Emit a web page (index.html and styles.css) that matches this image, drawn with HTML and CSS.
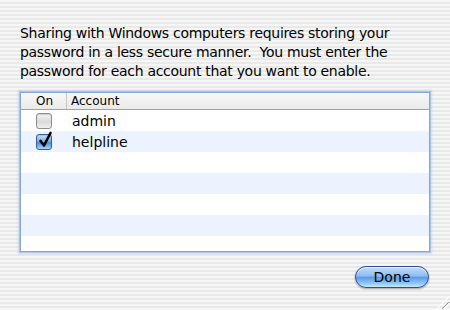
FILE: index.html
```html
<!DOCTYPE html>
<html lang="en">
<head>
    <meta charset="UTF-8">
    <title>Windows Sharing Accounts</title>
    <link rel="stylesheet" href="styles.css">
</head>
<body>
    <div class="sheet">
        <p class="msg">Sharing with Windows computers requires storing your<br>password in a less secure manner.&nbsp; You must enter the<br>password for each account that you want to enable.</p>

        <div class="list">
            <div class="head">
                <div class="col-on">On</div>
                <div class="col-acc">Account</div>
            </div>
            <div class="row">
                <div class="col-on"><span class="check"></span></div>
                <div class="col-acc">admin</div>
            </div>
            <div class="row">
                <div class="col-on">
                    <span class="check on">
                        <svg viewBox="0 0 16 18" width="16" height="18"><path d="M3.5 10 L7 14.5 L13.5 2" fill="none" stroke="#000" stroke-width="2.6" stroke-linecap="round" stroke-linejoin="round"/></svg>
                    </span>
                </div>
                <div class="col-acc">helpline</div>
            </div>
            <div class="row"></div>
            <div class="row"></div>
            <div class="row"></div>
            <div class="row"></div>
            <div class="row"></div>
        </div>

        <div class="buttons">
            <button class="done">Done</button>
        </div>
    </div>
    <div class="grip"></div>
</body>
</html>
```

FILE: styles.css
```css
html, body {
    margin: 0;
    height: 100%;
}
body {
    background: repeating-linear-gradient(to bottom, #f6f6f6 0, #f6f6f6 2px, #e9e9e9 2px, #e9e9e9 4px);
    font-family: 'DejaVu Sans', 'Lucida Grande', sans-serif;
    color: #000;
    position: relative;
    overflow: hidden;
}
.sheet {
    padding: 24px 20px 0 20px;
}
.msg {
    margin: 0;
    font-size: 14px;
    letter-spacing: -0.3px;
    line-height: 19px;
    white-space: nowrap;
}
.list {
    margin-top: 11px;
    height: 158px;
    background: #fff;
    border: 1px solid #8ba6cf;
    box-shadow: 0 0 0 1px rgba(140,175,225,0.55), 0 0 2px 2px rgba(160,190,235,0.45);
    overflow: hidden;
}
.head {
    display: flex;
    height: 16px;
    background: linear-gradient(to bottom, #f7f7f7 0%, #eaeaea 100%);
    border-bottom: 1px solid #a2a2a2;
    font-size: 12px;
    line-height: 16px;
}
.head .col-on {
    width: 46px;
    border-right: 1px solid #c6c6c6;
    padding-left: 15px;
    box-sizing: border-box;
}
.head .col-acc {
    padding-left: 4px;
}
.row {
    display: flex;
    align-items: center;
    height: 21px;
    font-size: 14px;
}
.row:nth-child(odd) {
    background: #edf3fe;
}
.row .col-on {
    width: 47px;
    padding-left: 15px;
    box-sizing: border-box;
    display: flex;
    align-items: center;
}
.row .col-acc {
    padding-left: 4px;
}
.check {
    position: relative;
    display: block;
    width: 14px;
    height: 14px;
    border: 1px solid #8e8e8e;
    border-radius: 3px;
    background: linear-gradient(to bottom, #f4f4f4 0%, #dadada 55%, #f0f0f0 100%);
    box-shadow: inset 0 1px 1px rgba(0,0,0,0.15);
}
.check.on {
    border-color: #3d5a94;
    background: linear-gradient(to bottom, #cfe3fb 0%, #79aeea 45%, #4c8ddc 55%, #a8d4fb 100%);
}
.check svg {
    position: absolute;
    left: 0;
    top: -4px;
}
.buttons {
    display: flex;
    justify-content: flex-end;
    margin-top: 14px;
    padding-right: 1px;
}
.done {
    width: 74px;
    height: 22px;
    border-radius: 11px;
    border: 1px solid #354b8c;
    background: linear-gradient(to bottom, #c4dcf8 0%, #8cbdf1 45%, #5b9be6 52%, #8cc4f6 80%, #c3eaff 100%);
    box-shadow: 0 1px 2px rgba(0,0,0,0.35), inset 0 1px 0 rgba(255,255,255,0.6);
    font-family: 'DejaVu Sans', 'Lucida Grande', sans-serif;
    font-size: 14px;
    line-height: 18px;
    color: #000;
    padding: 0;
}
.grip {
    position: absolute;
    right: 1px;
    bottom: 1px;
    width: 13px;
    height: 13px;
    background: repeating-linear-gradient(135deg, transparent 0, transparent 3px, #8a8a8a 3px, #8a8a8a 4px, #fff 4px, #fff 5px);
    clip-path: polygon(100% 0, 100% 100%, 0 100%);
}
```
